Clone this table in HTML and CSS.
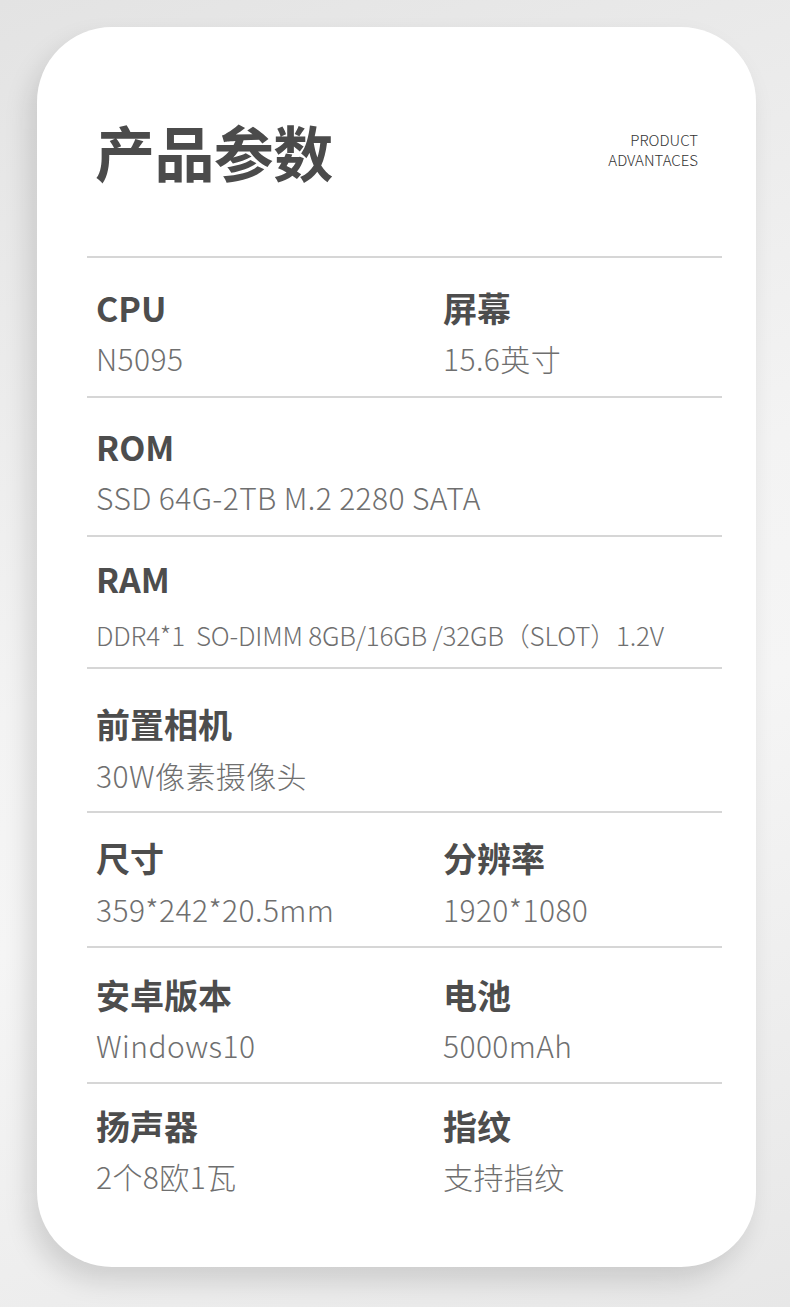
FILE: index.html
```html
<!DOCTYPE html>
<html lang="zh-CN">
<head>
<meta charset="utf-8">
<title>产品参数</title>
<link rel="stylesheet" href="styles.css">
</head>
<body>
<div class="page">
  <div class="card">
    <header class="head">
      <h1 class="title">产品参数</h1>
      <div class="subtitle">PRODUCT<br>ADVANTACES</div>
    </header>
    <div class="specs">
      <div class="row row-1">
        <div class="item"><div class="label">CPU</div><div class="value">N5095</div></div>
        <div class="item"><div class="label">屏幕</div><div class="value">15.6英寸</div></div>
      </div>
      <div class="row row-2">
        <div class="item"><div class="label">ROM</div><div class="value">SSD 64G-2TB M.2 2280 SATA</div></div>
      </div>
      <div class="row row-3">
        <div class="item"><div class="label">RAM</div><div class="value value-sm">DDR4*1&nbsp; SO-DIMM 8GB/16GB /32GB（SLOT）1.2V</div></div>
      </div>
      <div class="row row-4">
        <div class="item"><div class="label">前置相机</div><div class="value">30W像素摄像头</div></div>
      </div>
      <div class="row row-5">
        <div class="item"><div class="label">尺寸</div><div class="value">359*242*20.5mm</div></div>
        <div class="item"><div class="label">分辨率</div><div class="value">1920*1080</div></div>
      </div>
      <div class="row row-6">
        <div class="item"><div class="label">安卓版本</div><div class="value">Windows10</div></div>
        <div class="item"><div class="label">电池</div><div class="value">5000mAh</div></div>
      </div>
      <div class="row row-7">
        <div class="item"><div class="label">扬声器</div><div class="value">2个8欧1瓦</div></div>
        <div class="item"><div class="label">指纹</div><div class="value">支持指纹</div></div>
      </div>
    </div>
  </div>
</div>
</body>
</html>
```

FILE: styles.css
```css
* { box-sizing: border-box; }
html, body { margin: 0; padding: 0; }
body {
  width: 790px;
  height: 1307px;
  overflow: hidden;
  font-family: "Noto Sans CJK SC", "Noto Sans", sans-serif;
  background: linear-gradient(160deg, #e3e3e3 0%, #f3f3f3 45%, #f5f5f5 60%, #e7e7e7 100%);
}
.page {
  padding: 27px 0 0 37px;
}
.card {
  width: 719px;
  height: 1240px;
  background: #ffffff;
  border-radius: 75px;
  box-shadow: -8px 14px 26px rgba(0, 0, 0, 0.13);
  padding: 0 34px 0 50px;
}
.head {
  height: 229px;
  display: flex;
  justify-content: space-between;
  align-items: flex-start;
  padding: 92px 24px 0 8px;
}
.title {
  margin: 0;
  font-size: 60px;
  line-height: 64px;
  font-weight: 700;
  color: #4b4b4b;
  letter-spacing: -0.6px;
}
.subtitle {
  margin-top: 11px;
  font-family: "Noto Sans CJK SC", "Noto Sans", sans-serif;
  font-size: 15px;
  line-height: 20px;
  font-weight: 300;
  color: #333333;
  text-align: right;
}
.row {
  border-top: 2px solid #d6d6d6;
  display: grid;
  grid-template-columns: 347px 1fr;
  padding-left: 9px;
}
.label {
  font-size: 34px;
  line-height: 40px;
  font-weight: 700;
  color: #4d4d4d;
}
.value {
  margin-top: 12px;
  font-size: 30px;
  line-height: 36px;
  font-weight: 300;
  color: #6f6f6f;
  letter-spacing: 0.4px;
  white-space: nowrap;
}
.value-sm {
  font-size: 26px;
  letter-spacing: -0.2px;
  margin-top: 18px;
}
.row-1 { padding-top: 30px; padding-bottom: 20px; }
.row-2 { padding-top: 29px; padding-bottom: 20px; }
.row-3 { padding-top: 22px; padding-bottom: 14px; }
.row-4 { padding-top: 35px; padding-bottom: 18px; }
.row-4 .value { margin-top: 13px; }
.row-5 { padding-top: 25px; padding-bottom: 19px; }
.row-5 .value { margin-top: 13px; }
.row-6 { padding-top: 27px; padding-bottom: 19px; }
.row-7 { padding-top: 22px; }
```
